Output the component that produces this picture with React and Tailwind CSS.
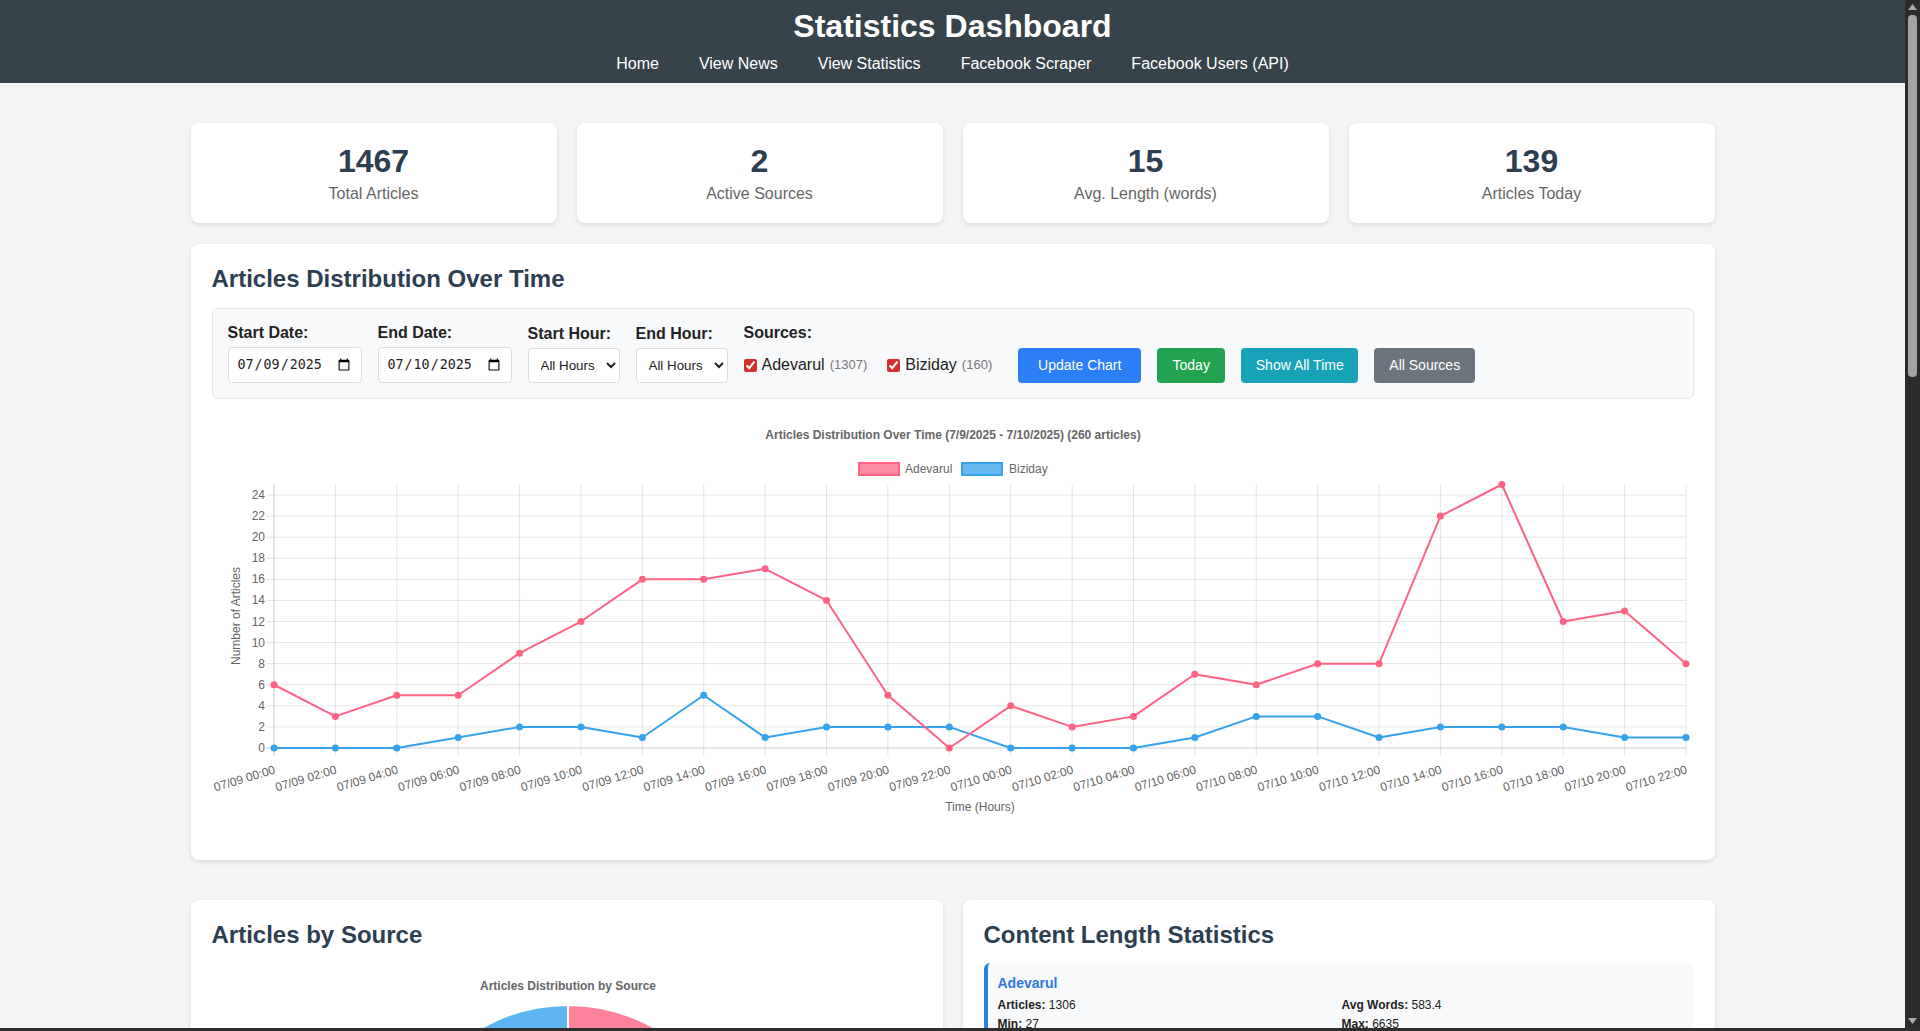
import React from 'react';

const labels = Array.from({ length: 24 }, (_, i) => {
  const day = i < 12 ? '07/09' : '07/10';
  const hour = String((i % 12) * 2).padStart(2, '0');
  return `${day} ${hour}:00`;
});

const adevarul = [6, 3, 5, 5, 9, 12, 16, 16, 17, 14, 5, 0, 4, 2, 3, 7, 6, 8, 8, 22, 25, 12, 13, 8];
const biziday = [0, 0, 0, 1, 2, 2, 1, 5, 1, 2, 2, 2, 0, 0, 0, 1, 3, 3, 1, 2, 2, 2, 1, 1];

// chart geometry, in px inside the canvas
const X0 = 63;
const STEP = 1412 / 23;
const Y0 = 338;
const UNIT = 10.54;
const px = (i) => X0 + i * STEP;
const py = (v) => Y0 - v * UNIT;

const PINK = 'rgb(255, 99, 132)';
const BLUE = 'rgb(54, 162, 235)';

const stats = [
  { value: '1467', label: 'Total Articles' },
  { value: '2', label: 'Active Sources' },
  { value: '15', label: 'Avg. Length (words)' },
  { value: '139', label: 'Articles Today' },
];

const navLinks = ['Home', 'View News', 'View Statistics', 'Facebook Scraper', 'Facebook Users (API)'];

function Series({ data, color }) {
  const points = data.map((v, i) => `${px(i)},${py(v)}`).join(' ');
  return (
    <g>
      <polyline points={points} fill="none" stroke={color} strokeWidth="2" strokeLinejoin="round" />
      {data.map((v, i) => (
        <circle key={i} cx={px(i)} cy={py(v)} r="3.5" fill={color} />
      ))}
    </g>
  );
}

function LineChart() {
  const top = py(25);
  const right = px(23);
  const ticks = Array.from({ length: 13 }, (_, i) => i * 2);

  return (
    <svg width="1484" height="430" viewBox="0 0 1484 430" className="block -ml-px">
      <text x="742" y="29" textAnchor="middle" fontSize="12" fontWeight="bold" fill="#666">
        Articles Distribution Over Time (7/9/2025 - 7/10/2025) (260 articles)
      </text>

      {/* legend */}
      <rect x="648" y="53" width="40" height="12" fill="rgba(255, 99, 132, 0.75)" stroke={PINK} strokeWidth="2" />
      <text x="694" y="63" fontSize="12" fill="#666">Adevarul</text>
      <rect x="751" y="53" width="40" height="12" fill="rgba(54, 162, 235, 0.75)" stroke={BLUE} strokeWidth="2" />
      <text x="798" y="63" fontSize="12" fill="#666">Biziday</text>

      {/* grid */}
      {ticks.map((t) => (
        <g key={t}>
          <line x1={X0 - 8} x2={right} y1={py(t)} y2={py(t)} stroke={t === 0 ? 'rgba(0,0,0,0.2)' : 'rgba(0,0,0,0.1)'} />
          <text x="54" y={py(t) + 4} textAnchor="end" fontSize="12" fill="#666">{t}</text>
        </g>
      ))}
      {labels.map((l, i) => (
        <g key={l}>
          <line x1={px(i)} x2={px(i)} y1={top} y2={Y0 + 8} stroke={i === 0 ? 'rgba(0,0,0,0.2)' : 'rgba(0,0,0,0.1)'} />
          <text x={px(i) + 2} y="363" textAnchor="end" fontSize="12" fill="#666" transform={`rotate(-17 ${px(i) + 2} 363)`}>
            {l}
          </text>
        </g>
      ))}

      <text transform="translate(29 206) rotate(-90)" textAnchor="middle" fontSize="12" fill="#666">Number of Articles</text>
      <text x="769" y="401" textAnchor="middle" fontSize="12" fill="#666">Time (Hours)</text>

      <Series data={biziday} color={BLUE} />
      <Series data={adevarul} color={PINK} />
    </svg>
  );
}

function PieChart() {
  const cx = 356;
  const cy = 220;
  const r = 175;
  const total = 1307 + 160;
  const a0 = -Math.PI / 2;
  const a1 = a0 + (2 * Math.PI * 1307) / total;
  const x0 = cx + r * Math.cos(a0);
  const y0 = cy + r * Math.sin(a0);
  const x1 = cx + r * Math.cos(a1);
  const y1 = cy + r * Math.sin(a1);

  return (
    <svg width="712" height="420" viewBox="0 0 712 420" className="block">
      <text x="356" y="30" textAnchor="middle" fontSize="12" fontWeight="bold" fill="#666">
        Articles Distribution by Source
      </text>
      <path d={`M${cx} ${cy} L${x0} ${y0} A${r} ${r} 0 1 1 ${x1} ${y1} Z`} fill="rgba(255, 99, 132, 0.8)" stroke="#fff" strokeWidth="2" />
      <path d={`M${cx} ${cy} L${x1} ${y1} A${r} ${r} 0 0 1 ${x0} ${y0} Z`} fill="rgba(54, 162, 235, 0.8)" stroke="#fff" strokeWidth="2" />
    </svg>
  );
}

function Field({ label, children }) {
  return (
    <div className="flex flex-col">
      <label className="text-[16px] font-bold text-[#222] leading-[18px] mb-[5px]">{label}</label>
      {children}
    </div>
  );
}

function SourceCheck({ name, count }) {
  return (
    <label className="flex items-center">
      <input type="checkbox" defaultChecked className="w-[13px] h-[13px] mr-[5px] accent-[#d32f2f]" />
      <span className="text-[16px] text-[#222]">{name}</span>
      <span className="text-[13px] text-[#777] ml-[5px]">({count})</span>
    </label>
  );
}

function Controls() {
  return (
    <div className="flex items-end gap-4 bg-[#f8f9fa] border border-[#e3e6ea] rounded-md p-[15px]">
      <Field label="Start Date:">
        <input
          type="date"
          defaultValue="2025-07-09"
          className="w-[134px] h-[36px] px-2 bg-white border border-[#ddd] rounded text-[13.33px] font-['DejaVu_Sans_Mono',monospace] text-[#222]"
        />
      </Field>
      <Field label="End Date:">
        <input
          type="date"
          defaultValue="2025-07-10"
          className="w-[134px] h-[36px] px-2 bg-white border border-[#ddd] rounded text-[13.33px] font-['DejaVu_Sans_Mono',monospace] text-[#222]"
        />
      </Field>
      <Field label="Start Hour:">
        <select className="w-[92px] h-[35px] pl-2 bg-white border border-[#ddd] rounded text-[13.33px] text-[#222]">
          <option>All Hours</option>
        </select>
      </Field>
      <Field label="End Hour:">
        <select className="w-[92px] h-[35px] pl-2 bg-white border border-[#ddd] rounded text-[13.33px] text-[#222]">
          <option>All Hours</option>
        </select>
      </Field>
      <div className="flex flex-col mr-[10px]">
        <span className="text-[16px] font-bold text-[#222] leading-[18px] mb-[5px]">Sources:</span>
        <div className="flex items-center gap-5 h-[36px]">
          <SourceCheck name="Adevarul" count="1307" />
          <SourceCheck name="Biziday" count="160" />
        </div>
      </div>
      <button className="w-[123px] h-[35px] rounded text-[14px] text-white bg-[#2b7ef5]">Update Chart</button>
      <button className="w-[68px] h-[35px] rounded text-[14px] text-white bg-[#22a350]">Today</button>
      <button className="w-[117px] h-[35px] rounded text-[14px] text-white bg-[#17a2b8]">Show All Time</button>
      <button className="w-[101px] h-[35px] rounded text-[14px] text-white bg-[#6c757d]">All Sources</button>
    </div>
  );
}

function ScrollBar() {
  return (
    <div className="w-[15px] bg-[#2b2b2b] flex flex-col items-center">
      <svg width="9" height="6" viewBox="0 0 9 6" className="mt-[4px]">
        <path d="M4.5 0 L9 6 L0 6 Z" fill="#a8a8a8" />
      </svg>
      <div className="w-[9px] h-[362px] mt-[5px] rounded-[4px] bg-[#a3a3a3]" />
      <div className="flex-1" />
      <svg width="9" height="6" viewBox="0 0 9 6" className="mb-[4px]">
        <path d="M0 0 L9 0 L4.5 6 Z" fill="#a8a8a8" />
      </svg>
    </div>
  );
}

export default function App() {
  return (
    <div className="h-screen flex flex-col overflow-hidden font-['Liberation_Sans',Arial,sans-serif]">
      <div className="flex-1 flex min-h-0">
        <div className="flex-1 min-w-0 overflow-hidden bg-[#f4f4f4]">
          <header className="h-[83px] bg-[#36434b] text-white pt-2 text-center">
            <h1 className="text-[32px] font-bold leading-[37px]">Statistics Dashboard</h1>
            <nav className="mt-[10px] flex justify-center">
              {navLinks.map((link) => (
                <a key={link} href="#" className="mx-[15px] px-[5px] text-[16px] leading-[18px] text-white">
                  {link}
                </a>
              ))}
            </nav>
          </header>

          <main className="w-[80%] mx-auto pt-10">
            <div className="grid grid-cols-4 gap-5 mb-[21px]">
              {stats.map((s) => (
                <div key={s.label} className="h-[100px] bg-white rounded-lg shadow-[0_2px_5px_rgba(0,0,0,0.1)] pt-5 text-center">
                  <div className="text-[32px] font-bold leading-[37px] text-[#2c3e50]">{s.value}</div>
                  <div className="text-[16px] leading-[18px] mt-[5px] text-[#666]">{s.label}</div>
                </div>
              ))}
            </div>

            <section className="bg-white rounded-lg shadow-[0_2px_5px_rgba(0,0,0,0.1)] pt-[21px] px-[21px] pb-5 mb-10">
              <h2 className="text-[24px] font-bold leading-[28px] text-[#2c3e50] mb-[15px]">Articles Distribution Over Time</h2>
              <Controls />
              <div className="mt-[11px]">
                <LineChart />
              </div>
            </section>

            <div className="grid grid-cols-2 gap-5">
              <section className="h-[500px] bg-white rounded-lg shadow-[0_2px_5px_rgba(0,0,0,0.1)] pt-[21px] px-[21px]">
                <h2 className="text-[24px] font-bold leading-[28px] text-[#2c3e50]">Articles by Source</h2>
                <div className="mt-[11px]">
                  <PieChart />
                </div>
              </section>

              <section className="h-[500px] bg-white rounded-lg shadow-[0_2px_5px_rgba(0,0,0,0.1)] pt-[21px] px-[21px]">
                <h2 className="text-[24px] font-bold leading-[28px] text-[#2c3e50]">Content Length Statistics</h2>
                <div className="mt-[14px] bg-[#f8f9fa] border-l-4 border-[#2f7de1] rounded-md pl-[10px] pr-2 pt-3 pb-3">
                  <div className="text-[14px] font-bold leading-[16px] text-[#2b78e4] mb-[5px]">Adevarul</div>
                  <div className="grid grid-cols-2 text-[12px] leading-[19px] text-[#222]">
                    <div><b>Articles:</b> 1306</div>
                    <div><b>Avg Words:</b> 583.4</div>
                    <div><b>Min:</b> 27</div>
                    <div><b>Max:</b> 6635</div>
                  </div>
                </div>
              </section>
            </div>
          </main>
        </div>
        <ScrollBar />
      </div>
      <div className="h-[3px] bg-[#2e2e2e]" />
    </div>
  );
}
